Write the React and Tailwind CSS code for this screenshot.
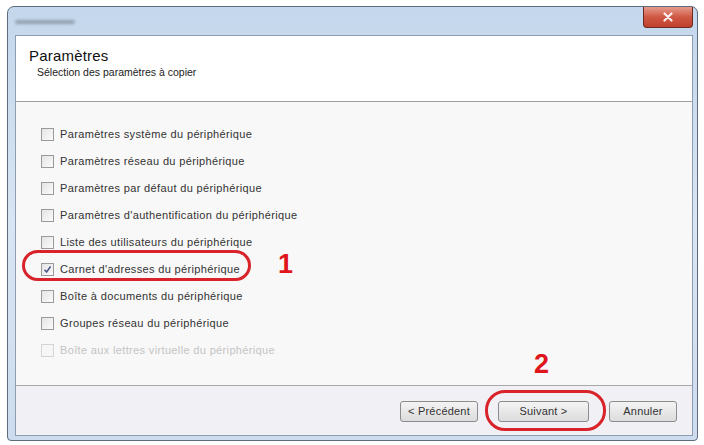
import React from "react";

const ITEMS = [
  { label: "Paramètres système du périphérique" },
  { label: "Paramètres réseau du périphérique" },
  { label: "Paramètres par défaut du périphérique" },
  { label: "Paramètres d'authentification du périphérique" },
  { label: "Liste des utilisateurs du périphérique" },
  { label: "Carnet d'adresses du périphérique", checked: true, mark: "1" },
  { label: "Boîte à documents du périphérique" },
  { label: "Groupes réseau du périphérique" },
  { label: "Boîte aux lettres virtuelle du périphérique", disabled: true },
];

function Checkbox({ checked, disabled }) {
  return (
    <span
      className={`flex h-[13px] w-[13px] shrink-0 items-center justify-center border ${
        disabled ? "border-[#d4d4d4] bg-[#f6f6f6]" : "border-[#9a9a9a] bg-gradient-to-br from-[#e4e4e4] to-[#fbfbfb]"
      }`}
    >
      {checked && (
        <svg width="9" height="9" viewBox="0 0 9 9">
          <path d="M1.5 4.8 L3.6 7 L7.6 1.5" fill="none" stroke="#4a5a8c" strokeWidth="1.6" />
        </svg>
      )}
    </span>
  );
}

function Button({ children, width, highlight }) {
  return (
    <div className="relative">
      <button
        className="flex h-[21px] items-center justify-center rounded-[3px] border border-[#8c8c8c] bg-gradient-to-b from-[#f4f4f4] to-[#dcdcdc] text-[11px] tracking-[0.2px] text-[#333]"
        style={{ width }}
      >
        {children}
      </button>
      {highlight && (
        <>
          <div className="pointer-events-none absolute left-[-13px] top-[-11px] h-[41px] w-[121px] rounded-[20px] border-[3px] border-[#d8232a]" />
          <div className="pointer-events-none absolute left-[36px] top-[-50px] text-[27px] font-bold leading-none text-[#e0151c]">2</div>
        </>
      )}
    </div>
  );
}

export default function App() {
  return (
    <div className="h-[445px] w-[704px] bg-white pb-[4px] pl-[7px] pr-[6px] pt-[6px] font-['Liberation_Sans',Arial,sans-serif]">
      <div className="flex h-full flex-col rounded-b-[4px] rounded-t-[7px] border border-[#5e6b7c] bg-gradient-to-b from-[#c4d7ec] via-[#d8e5f2] to-[#cddcee] pb-[4px] pl-[7px] pr-[4px]">
        {/* title bar */}
        <div className="flex h-[28px] shrink-0 items-start justify-between">
          <div className="mt-[13px] h-[4px] w-[60px] rounded-full bg-[#7d8896] opacity-70 blur-[1.5px]" />
          <div className="flex h-[21px] w-[50px] items-center justify-center rounded-b-[4px] border border-t-0 border-[#6b2a22] bg-gradient-to-b from-[#e59a8c] via-[#cf5843] to-[#c0402c]">
            <svg width="12" height="10" viewBox="0 0 12 10">
              <path d="M2.5 1.5 L9.5 8.5 M9.5 1.5 L2.5 8.5" stroke="#fbeeee" strokeWidth="2.2" strokeLinecap="round" />
            </svg>
          </div>
        </div>

        {/* inner panel */}
        <div className="flex flex-1 flex-col border border-[#8d9db2] bg-white">
          <div className="h-[66px] shrink-0 border-b border-[#a0a0a0] bg-white pl-[13px] pt-[11px]">
            <div className="text-[15px] leading-[17px] tracking-[0.2px] text-[#111]">Paramètres</div>
            <div className="pl-[8px] pt-[2px] text-[10.5px] leading-[13px] text-[#222]">Sélection des paramètres à copier</div>
          </div>

          <div className="flex-1 bg-[#f8f8f8] pl-[25px] pt-[19px]">
            {ITEMS.map((it) => (
              <div key={it.label} className="flex h-[27px] items-center">
                <div className="relative flex items-center gap-[6px]">
                  <Checkbox checked={it.checked} disabled={it.disabled} />
                  <span className={`text-[11px] tracking-[0.35px] ${it.disabled ? "text-[#c4c4c4]" : "text-[#333]"}`}>{it.label}</span>
                  {it.mark && (
                    <>
                      <div className="pointer-events-none absolute left-[-19px] top-[-11px] h-[31px] w-[229px] rounded-[16px] border-[3px] border-[#d8232a]" />
                      <div className="pointer-events-none absolute left-[237px] top-[-10px] text-[27px] font-bold leading-none text-[#e0151c]">{it.mark}</div>
                    </>
                  )}
                </div>
              </div>
            ))}
          </div>

          <div className="flex h-[50px] shrink-0 items-start justify-end gap-[20px] border-t border-[#a8a8a8] bg-[#f1f0f5] pr-[15px] pt-[15px]">
            <Button width={78}>&lt; Précédent</Button>
            <Button width={91} highlight>Suivant &gt;</Button>
            <Button width={68}>Annuler</Button>
          </div>
        </div>
      </div>
    </div>
  );
}
